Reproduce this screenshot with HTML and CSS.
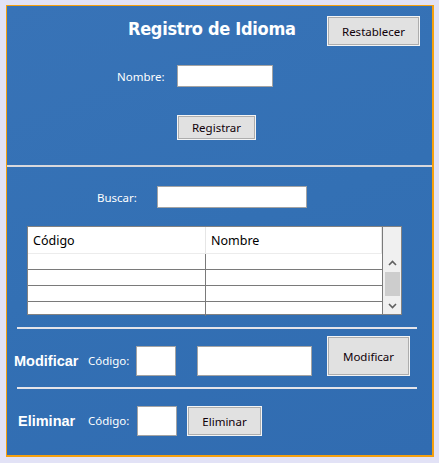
FILE: index.html
```html
<!DOCTYPE html>
<html lang="es">
<head>
  <meta charset="UTF-8" />
  <title>Registro de Idioma</title>
  <link rel="stylesheet" href="styles.css">
</head>
<body>
  <div class="window">
    <div class="top">
      <div class="head">
        <h1>Registro de Idioma</h1>
        <button class="btn btn-reset">Restablecer</button>
      </div>
      <div class="row row-nombre">
        <label class="lbl" for="nombre">Nombre:</label>
        <input class="txt txt-nombre" type="text" id="nombre" />
      </div>
      <button class="btn btn-registrar">Registrar</button>
    </div>

    <div class="divider"></div>

    <div class="bottom">
      <div class="row row-buscar">
        <label class="lbl" for="buscar">Buscar:</label>
        <input class="txt txt-buscar" type="text" id="buscar" />
      </div>

      <div class="grid">
        <div class="grid-body">
          <div class="grid-head">
            <div class="cell">Código</div>
            <div class="cell">Nombre</div>
          </div>
          <div class="grid-row"><div class="cell"></div><div class="cell"></div></div>
          <div class="grid-row"><div class="cell"></div><div class="cell"></div></div>
          <div class="grid-row"><div class="cell"></div><div class="cell"></div></div>
          <div class="grid-row last"><div class="cell"></div><div class="cell"></div></div>
        </div>
        <div class="scroll">
          <div class="arrow">
            <svg width="9" height="6" viewBox="0 0 9 6"><path d="M1 5 L4.5 1.5 L8 5" fill="none" stroke="#606060" stroke-width="1.6"/></svg>
          </div>
          <div class="thumb"></div>
          <div class="scroll-space"></div>
          <div class="arrow">
            <svg width="9" height="6" viewBox="0 0 9 6"><path d="M1 1 L4.5 4.5 L8 1" fill="none" stroke="#606060" stroke-width="1.6"/></svg>
          </div>
        </div>
      </div>

      <div class="line"></div>

      <div class="action action-mod">
        <span class="sec-title">Modificar</span>
        <label class="lbl-small">Código:</label>
        <input class="txt txt-code" type="text" />
        <input class="txt txt-name" type="text" />
        <button class="btn btn-mod">Modificar</button>
      </div>

      <div class="line line-2"></div>

      <div class="action action-del">
        <span class="sec-title">Eliminar</span>
        <label class="lbl-small">Código:</label>
        <input class="txt txt-code" type="text" />
        <button class="btn btn-del">Eliminar</button>
      </div>
    </div>
  </div>
</body>
</html>
```

FILE: styles.css
```css
body {
  margin: 0;
  background: #e2e2f6;
  font-family: "Noto Sans", Arial, sans-serif;
}
.window {
  margin: 5px 0 0 6px;
  width: 425px;
  height: 449px;
  border-left: 1px solid #f5a00f;
  border-top: 1px solid #f5a00f;
  border-right: 2px solid #f5a00f;
  border-bottom: 2px solid #f5a00f;
  background: linear-gradient(160deg, #3873b7, #3370b4 50%, #316cb1);
  color: white;
}
.top {
  height: 159px;
}
.head {
  display: flex;
  align-items: flex-start;
  padding-top: 10px;
}
h1 {
  margin: 2px 0 0 121px;
  font-family: "DejaVu Sans", Verdana, sans-serif;
  font-stretch: condensed;
  font-size: 18px;
  line-height: 22px;
  font-weight: bold;
  letter-spacing: -0.3px;
}
.btn {
  box-sizing: border-box;
  background: #e1e1e1;
  border: 1px solid #adadad;
  outline: 1px solid #f4f4f4;
  outline-offset: 0;
  color: #100008;
  font-family: "Noto Sans", Arial, sans-serif;
  font-size: 11.5px;
  padding: 0;
}
.btn-reset {
  margin: 1px 13px 0 auto;
  width: 91px;
  height: 28px;
}
.row {
  display: flex;
  align-items: center;
}
.lbl {
  width: 60px;
  font-size: 11.5px;
}
.txt {
  box-sizing: border-box;
  border: 1px solid #a3a3a3;
  background: white;
  padding: 0;
  margin: 0;
}
.row-nombre {
  margin: 20px 0 0 110px;
}
.txt-nombre {
  width: 96px;
  height: 22px;
}
.btn-registrar {
  display: block;
  margin: 29px 0 0 171px;
  width: 77px;
  height: 23px;
}
.divider {
  height: 2px;
  background: #d8d8dc;
}
.row-buscar {
  margin: 19px 0 0 90px;
}
.txt-buscar {
  width: 150px;
  height: 22px;
}
.grid {
  display: flex;
  margin: 18px 0 0 20px;
  width: 375px;
  height: 89px;
  box-sizing: border-box;
  border: 1px solid #828282;
  background: white;
  color: black;
}
.grid-body {
  width: 355px;
  border-right: 1px solid #7a7a7a;
  box-sizing: border-box;
}
.grid-head {
  display: flex;
  height: 27px;
  border-bottom: 1px solid #ececec;
  box-sizing: border-box;
  font-size: 12.5px;
}
.grid-head .cell {
  padding: 5px 0 0 5px;
  border-right: 1px solid #e6e6e6;
}
.cell {
  box-sizing: border-box;
  width: 178px;
  border-right: 1px solid #7a7a7a;
}
.cell + .cell {
  flex: 1;
  border-right: none;
}
.grid-head .cell + .cell {
  border-right: 1px solid #e6e6e6;
}
.grid-row {
  display: flex;
  height: 16px;
  border-bottom: 1px solid #7a7a7a;
  box-sizing: border-box;
}
.grid-row.last {
  height: 14px;
  border-bottom: none;
}
.scroll {
  flex: 1;
  display: flex;
  flex-direction: column;
  align-items: center;
  background: #f0f0f0;
  padding-top: 27px;
}
.arrow {
  height: 17px;
  display: flex;
  align-items: center;
}
.thumb {
  width: 15px;
  height: 24px;
  margin-top: 1px;
  background: #cdcdcd;
}
.scroll-space {
  flex: 1;
}
.line {
  margin: 12px 0 0 10px;
  width: 400px;
  height: 2px;
  background: #e4e4ea;
}
.action {
  display: flex;
  align-items: flex-end;
}
.action-mod {
  margin: 8px 0 0 7px;
}
.sec-title {
  font-family: "Liberation Sans", Arial, sans-serif;
  font-weight: bold;
  font-size: 14.5px;
  line-height: 30px;
  width: 74px;
}
.lbl-small {
  font-size: 11.5px;
  line-height: 30px;
  width: 48px;
}
.txt-code {
  width: 40px;
  height: 30px;
}
.txt-name {
  margin-left: 21px;
  width: 115px;
  height: 30px;
}
.btn-mod {
  margin: 0 0 1px 16px;
  width: 81px;
  height: 38px;
}
.line-2 {
  margin-top: 11px;
}
.action-del {
  margin: 17px 0 0 11px;
}
.action-del .sec-title {
  width: 70px;
}
.action-del .lbl-small {
  width: 49px;
}
.btn-del {
  margin: 0 0 1px 11px;
  width: 73px;
  height: 28px;
}
```
